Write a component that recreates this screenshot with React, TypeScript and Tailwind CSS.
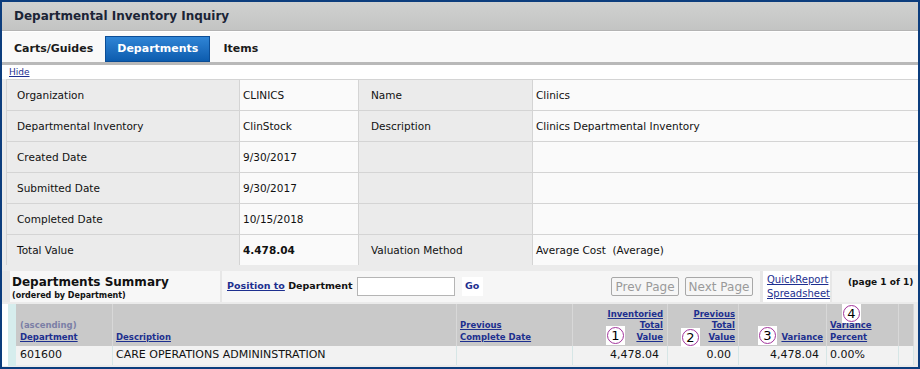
import React from "react";

const infoRows: [string, React.ReactNode, string, string][] = [
  ["Organization", "CLINICS", "Name", "Clinics"],
  ["Departmental Inventory", "ClinStock", "Description", "Clinics Departmental Inventory"],
  ["Created Date", "9/30/2017", "", ""],
  ["Submitted Date", "9/30/2017", "", ""],
  ["Completed Date", "10/15/2018", "", ""],
  ["Total Value", <b key="tv">4.478.04</b>, "Valuation Method", "Average Cost  (Average)"],
];

function Marker({ n, className }: { n: string; className: string }) {
  return (
    <span className={`absolute flex h-[19px] w-[19px] items-center justify-center bg-white ${className}`}>
      <span className="flex h-[17px] w-[17px] items-center justify-center rounded-full border-[1.5px] border-[#a2349c] text-[13px] leading-none text-black">
        {n}
      </span>
    </span>
  );
}

const link = "text-[#1d2f8f] underline";
const cols = "grid-cols-[97px_344px_116px_95px_71px_88px_72px_15px]";

export default function App() {
  return (
    <div className="relative h-[369px] w-[920px] overflow-hidden border-2 border-[#0c3d7d] bg-[#ebebeb] font-['DejaVu_Sans',Verdana,sans-serif] text-[10.5px] text-[#111]">
      {/* Title */}
      <div className="flex h-[29px] items-center border-b border-[#b4b4b4] bg-gradient-to-b from-[#d0d1d0] to-[#c3c4c3] pl-[12px] text-[12px] font-bold text-[#1b2436]">
        Departmental Inventory Inquiry
      </div>

      {/* Tabs */}
      <div className="flex h-[31px] items-end border-t border-white bg-[#f9f9f9] text-[11px] font-bold text-[#1b1b1b]">
        <div className="flex h-[26px] items-center px-[12px]">Carts/Guides</div>
        <div className="flex h-[26px] items-center border border-[#0b4d96] bg-gradient-to-b from-[#2f85d6] to-[#0c5cae] px-[11px] text-white">
          Departments
        </div>
        <div className="flex h-[26px] items-center px-[13px]">Items</div>
      </div>
      <div className="h-[3px] bg-[#b9b9b9]" />

      {/* Hide */}
      <div className="h-[14px] bg-white pl-[7px] text-[9px] leading-[14px]">
        <span className={link}>Hide</span>
      </div>

      {/* Header info */}
      <div className="ml-[4px] grid grid-cols-[232px_118px_173px_1fr] gap-px border-l border-t border-[#d4d4d4] bg-[#d4d4d4]">
        {infoRows.map(([l1, v1, l2, v2]) => (
          <React.Fragment key={l1}>
            <div className="flex h-[30px] items-center bg-[#ebebeb] pl-[10px] pt-[1px]">{l1}</div>
            <div className="flex h-[30px] items-center bg-[#fafafa] pl-[3px] pt-[1px]">{v1}</div>
            <div className="flex h-[30px] items-center bg-[#ebebeb] pl-[12px] pt-[1px]">{l2}</div>
            <div className="flex h-[30px] items-center whitespace-pre bg-[#fafafa] pl-[3px] pt-[1px]">{v2}</div>
          </React.Fragment>
        ))}
      </div>

      {/* Summary bar */}
      <div className="mt-[6px] flex h-[31px] bg-[#e7e7e7] pl-[8px]">
        <div className="flex w-[210px] shrink-0 flex-col bg-[#f7f7f7] pl-[2px] pt-[4px] font-bold">
          <span className="text-[12px] leading-[15px]">Departments Summary</span>
          <span className="text-[8px] leading-[11px]">(ordered by Department)</span>
        </div>
        <div className="ml-[2px] flex w-[538px] shrink-0 items-center whitespace-nowrap bg-[#f6f6f6] pl-[5px] pr-[7px] text-[9.5px] font-bold">
          <span className={link}>Position to</span>
          <span>&nbsp;Department</span>
          <span className="ml-[4px] h-[19px] w-[98px] shrink-0 border border-[#b5b5b5] bg-white" />
          <span className="ml-[7px] flex h-[19px] w-[21px] shrink-0 items-center justify-center bg-white text-[#1d2f8f]">Go</span>
          <span className="ml-auto flex h-[19px] w-[68px] shrink-0 items-center justify-center rounded-[2px] border border-[#a8a8a8] text-[12px] font-normal text-[#9a9a9a]">
            Prev Page
          </span>
          <span className="ml-[6px] flex h-[19px] w-[68px] shrink-0 items-center justify-center rounded-[2px] border border-[#a8a8a8] text-[12px] font-normal text-[#9a9a9a]">
            Next Page
          </span>
        </div>
        <div className="ml-[3px] flex w-[67px] shrink-0 flex-col justify-center gap-[3px] bg-white pl-[4px] text-[10px] leading-[11px]">
          <span className={link}>QuickReport</span>
          <span className={link}>Spreadsheet</span>
        </div>
        <div className="ml-[2px] flex-1 bg-[#f3f3f3] pl-[16px] pt-[5px] text-[9px] font-bold whitespace-nowrap">
          (page 1 of 1)
        </div>
      </div>

      {/* Table */}
      <div className="mt-[2px] flex h-[62px]">
        <div className="w-[6px] bg-white" />
        <div className="w-[8px] bg-[#d6eded]" />
        <div className="flex w-[898px] flex-col">
          <div className={`grid h-[42px] ${cols} bg-[#c9c9c9] text-[8.5px] font-bold leading-[11.5px]`}>
            <div className="flex flex-col justify-end border-r border-[#d8d8d8] pb-[3px] pl-[4px]">
              <span className="text-[#7b7fa6]">(ascending)</span>
              <span className={link}>Department</span>
            </div>
            <div className="flex flex-col justify-end border-r border-[#d8d8d8] pb-[3px] pl-[3px]">
              <span className={link}>Description</span>
            </div>
            <div className="flex flex-col justify-end border-r border-[#d8d8d8] pb-[3px] pl-[3px]">
              <span className={link}>Previous</span>
              <span className={link}>Complete Date</span>
            </div>
            <div className="flex flex-col items-end justify-end border-r border-[#d8d8d8] pb-[3px] pr-[4px]">
              <span className={link}>Inventoried</span>
              <span className={link}>Total</span>
              <span className={link}>Value</span>
            </div>
            <div className="flex flex-col items-end justify-end border-r border-[#d8d8d8] pb-[3px] pr-[3px]">
              <span className={link}>Previous</span>
              <span className={link}>Total</span>
              <span className={link}>Value</span>
            </div>
            <div className="flex flex-col items-end justify-end border-r border-[#d8d8d8] pb-[3px] pr-[3px]">
              <span className={link}>Variance</span>
            </div>
            <div className="flex flex-col justify-end border-r border-[#d8d8d8] pb-[3px] pl-[3px]">
              <span className={link}>Variance</span>
              <span className={link}>Percent</span>
            </div>
            <div className="border-r border-[#d8d8d8]" />
          </div>
          <div className={`grid h-[19px] ${cols} bg-[#f2f2f2] text-[11px]`}>
            <div className="flex items-center border-r border-[#d6e6e6] pl-[4px]">601600</div>
            <div className="flex items-center border-r border-[#d6e6e6] pl-[3px]">CARE OPERATIONS ADMININSTRATION</div>
            <div className="border-r border-[#d6e6e6]" />
            <div className="flex items-center justify-end border-r border-[#d6e6e6] pr-[8px]">4,478.04</div>
            <div className="flex items-center justify-end border-r border-[#d6e6e6] pr-[7px]">0.00</div>
            <div className="flex items-center justify-end border-r border-[#d6e6e6] pr-[7px]">4,478.04</div>
            <div className="flex items-center border-r border-[#d6e6e6] pl-[3px]">0.00%</div>
            <div className="border-r border-[#d6e6e6]" />
          </div>
        </div>
      </div>

      <Marker n="1" className="left-[604px] top-[324px]" />
      <Marker n="2" className="left-[679px] top-[326px]" />
      <Marker n="3" className="left-[756px] top-[324px]" />
      <Marker n="4" className="left-[840px] top-[302px]" />
    </div>
  );
}
